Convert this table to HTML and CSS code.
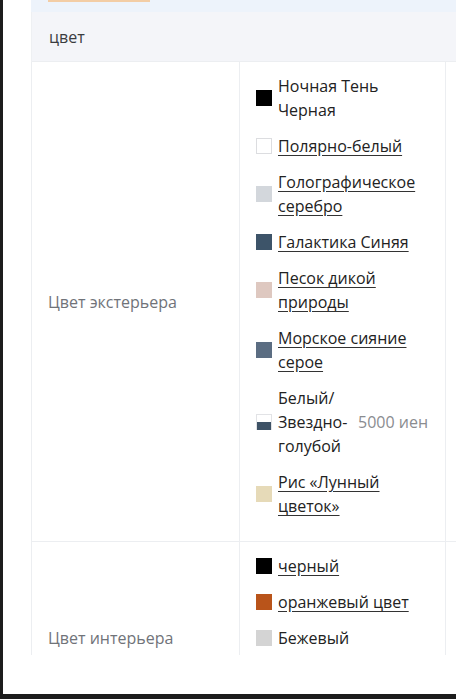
FILE: index.html
```html
<!DOCTYPE html>
<html lang="ru">
<head>
<meta charset="utf-8">
<link rel="stylesheet" href="styles.css">
</head>
<body>
<div class="frame">
  <div class="viewport">
    <div class="tabbar"><span class="tab-active"></span></div>
    <table class="spec">
      <colgroup><col class="c1"><col class="c2"><col class="c3"></colgroup>
      <thead>
        <tr><th colspan="3" class="head">цвет</th></tr>
      </thead>
      <tbody>
        <tr>
          <td class="label">Цвет экстерьера</td>
          <td class="colors">
            <ul class="list">
              <li class="item"><span class="sw" style="background:#000"></span><span class="name">Ночная Тень Черная</span></li>
              <li class="item"><span class="sw sw-white" style="background:#fff"></span><a class="name link">Полярно-белый</a></li>
              <li class="item"><span class="sw" style="background:#d3d7dc"></span><a class="name link">Голографическое серебро</a></li>
              <li class="item"><span class="sw" style="background:#3d5469"></span><a class="name link">Галактика Синяя</a></li>
              <li class="item"><span class="sw" style="background:#dec8c0"></span><a class="name link">Песок дикой природы</a></li>
              <li class="item"><span class="sw" style="background:#5b6d82"></span><a class="name link">Морское сияние серое</a></li>
              <li class="item"><span class="sw sw-two"></span><span class="name narrow">Белый/ Звездно-голубой</span><span class="price">5000 иен</span></li>
              <li class="item"><span class="sw" style="background:#e6dab8"></span><a class="name link">Рис «Лунный цветок»</a></li>
            </ul>
          </td>
          <td></td>
        </tr>
        <tr>
          <td class="label">Цвет интерьера</td>
          <td class="colors colors-tail">
            <ul class="list">
              <li class="item"><span class="sw" style="background:#000"></span><a class="name link">черный</a></li>
              <li class="item"><span class="sw" style="background:#b9541a"></span><a class="name link">оранжевый цвет</a></li>
              <li class="item"><span class="sw" style="background:#d4d4d4"></span><span class="name">Бежевый</span></li>
            </ul>
          </td>
          <td></td>
        </tr>
      </tbody>
    </table>
  </div>
</div>
</body>
</html>
```

FILE: styles.css
```css
html, body {
  margin: 0;
  padding: 0;
  background: #1c1c1c;
}
body {
  font-family: "Open Sans", "Noto Sans", sans-serif;
  font-size: 16px;
  color: #222;
}
.frame {
  margin-left: 3px;
  width: 453px;
  height: 694px;
  background: #fff;
  overflow: hidden;
}
.viewport {
  height: 655px;
  overflow: hidden;
  padding-left: 28px;
}
.tabbar {
  height: 12px;
  background: #edf3fb;
  position: relative;
  width: 500px;
}
.tab-active {
  position: absolute;
  left: 17px;
  top: 0;
  width: 102px;
  height: 2px;
  background: #f3cda5;
}
.spec {
  border-collapse: collapse;
  table-layout: fixed;
  width: 714px;
}
.c1 { width: 208px; }
.c2 { width: 206px; }
.c3 { width: 300px; }
.head {
  height: 48px;
  padding: 1px 0 0 17px;
  background: #f4f5f9;
  text-align: left;
  font-weight: normal;
  color: #3a3c40;
  border-left: 1px solid #eef0f3;
}
.spec td {
  border: 1px solid #eceef1;
  vertical-align: middle;
  padding: 0;
}
.label {
  padding-left: 16px !important;
  color: #707379;
}
.colors {
  padding: 12px 16px 23px 16px !important;
}
.colors-tail {
  padding-bottom: 83px !important;
}
.list {
  list-style: none;
  margin: 0;
  padding: 0;
}
.item {
  display: flex;
  align-items: center;
  line-height: 24px;
  margin-bottom: 12px;
}
.item:last-child { margin-bottom: 0; }
.sw {
  flex: none;
  width: 16px;
  height: 16px;
  margin-right: 6px;
  box-sizing: border-box;
}
.sw-white { border: 1px solid #dcdde0; }
.sw-two {
  background: linear-gradient(#fff 0 50%, #3e5266 50% 100%);
  border: 1px solid #e2e3e6;
  border-bottom: none;
}
.name {
  min-width: 0;
  color: #222;
}
.link {
  text-decoration: underline;
  text-decoration-color: #333;
  text-underline-offset: 3px;
}
.narrow { flex: 0 1 74px; }
.price {
  flex: none;
  margin-left: 6px;
  color: #8a8c90;
}
```
